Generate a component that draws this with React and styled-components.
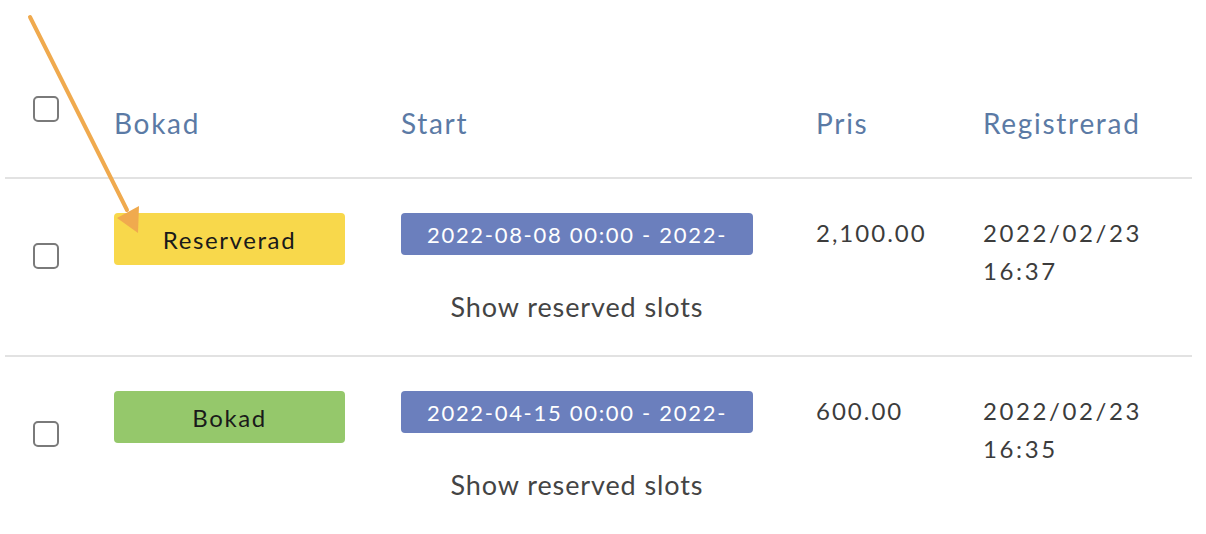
import React from "react";
import styled, { createGlobalStyle } from "styled-components";

const Global = createGlobalStyle`
  html, body { margin: 0; padding: 0; background: #fff; }
  body { font-family: Lato, "Open Sans", sans-serif; color: #3a3a3a; }
  * { box-sizing: border-box; }
`;

const Page = styled.div`
  position: relative;
  width: 1206px;
  height: 534px;
  overflow: hidden;
  padding-left: 5px;
`;

const Table = styled.div`
  width: 1187px;
`;

const cols = "109px 287px 415px 167px 1fr";

const HeaderRow = styled.div`
  display: grid;
  grid-template-columns: ${cols};
  align-items: start;
  height: 179px;
  border-bottom: 2px solid #e2e2e2;
`;

const Row = styled.div`
  display: grid;
  grid-template-columns: ${cols};
  align-items: start;
  height: 178px;
  padding-top: 34px;
  border-bottom: ${(p) => (p.$last ? "none" : "2px solid #e2e2e2")};
`;

const Check = styled.span`
  display: block;
  width: 26px;
  height: 26px;
  margin-left: 28px;
  margin-top: ${(p) => p.$top}px;
  border: 2px solid #7a7a7a;
  border-radius: 5px;
  background: #fff;
`;

const HeadText = styled.div`
  margin-top: 105px;
  font-size: 28px;
  line-height: 36px;
  letter-spacing: 1.7px;
  color: #5b7aa5;
`;

const Status = styled.div`
  width: 231px;
  height: 52px;
  border-radius: 4px;
  background: ${(p) => p.$bg};
  color: #1a1a1a;
  font-size: 24px;
  letter-spacing: 1.6px;
  display: flex;
  align-items: center;
  justify-content: center;
`;

const StartCell = styled.div`
  width: 352px;
  display: flex;
  flex-direction: column;
  align-items: center;
`;

const DateBadge = styled.div`
  width: 352px;
  height: 42px;
  border-radius: 4px;
  background: #6b7fbd;
  color: #fff;
  font-size: 22px;
  letter-spacing: 1.7px;
  display: flex;
  align-items: center;
  justify-content: center;
  overflow: hidden;
  white-space: nowrap;
`;

const SlotsLink = styled.div`
  margin-top: 35px;
  font-size: 27px;
  line-height: 34px;
  letter-spacing: 0.9px;
  color: #444;
`;

const ValueText = styled.div`
  font-size: 24px;
  line-height: 38px;
  letter-spacing: ${(p) => p.$ls}px;
  color: #3c3c3c;
  padding-top: 1px;
`;

const Arrow = styled.svg`
  position: absolute;
  left: 0;
  top: 0;
  pointer-events: none;
`;

const rows = [
  {
    status: "Reserverad",
    color: "#f8d84b",
    start: "2022-08-08 00:00 - 2022-",
    price: "2,100.00",
    date: "2022/02/23",
    time: "16:37",
  },
  {
    status: "Bokad",
    color: "#95c86b",
    start: "2022-04-15 00:00 - 2022-",
    price: "600.00",
    date: "2022/02/23",
    time: "16:35",
  },
];

export default function App() {
  return (
    <Page>
      <Global />
      <Table>
        <HeaderRow>
          <Check $top={96} />
          <HeadText>Bokad</HeadText>
          <HeadText>Start</HeadText>
          <HeadText>Pris</HeadText>
          <HeadText>Registrerad</HeadText>
        </HeaderRow>
        {rows.map((r, i) => (
          <Row key={i} $last={i === rows.length - 1}>
            <Check $top={30} />
            <Status $bg={r.color}>{r.status}</Status>
            <StartCell>
              <DateBadge>{r.start}</DateBadge>
              <SlotsLink>Show reserved slots</SlotsLink>
            </StartCell>
            <ValueText $ls={2}>{r.price}</ValueText>
            <ValueText $ls={2.6}>
              {r.date}
              <br />
              {r.time}
            </ValueText>
          </Row>
        ))}
      </Table>
      <Arrow width="1206" height="534" viewBox="0 0 1206 534">
        <line x1="30" y1="17" x2="127" y2="210" stroke="#f0aa4e" strokeWidth="4" strokeLinecap="round" />
        <polygon points="139,206 117,218 138,233" fill="#f0aa4e" />
      </Arrow>
    </Page>
  );
}
